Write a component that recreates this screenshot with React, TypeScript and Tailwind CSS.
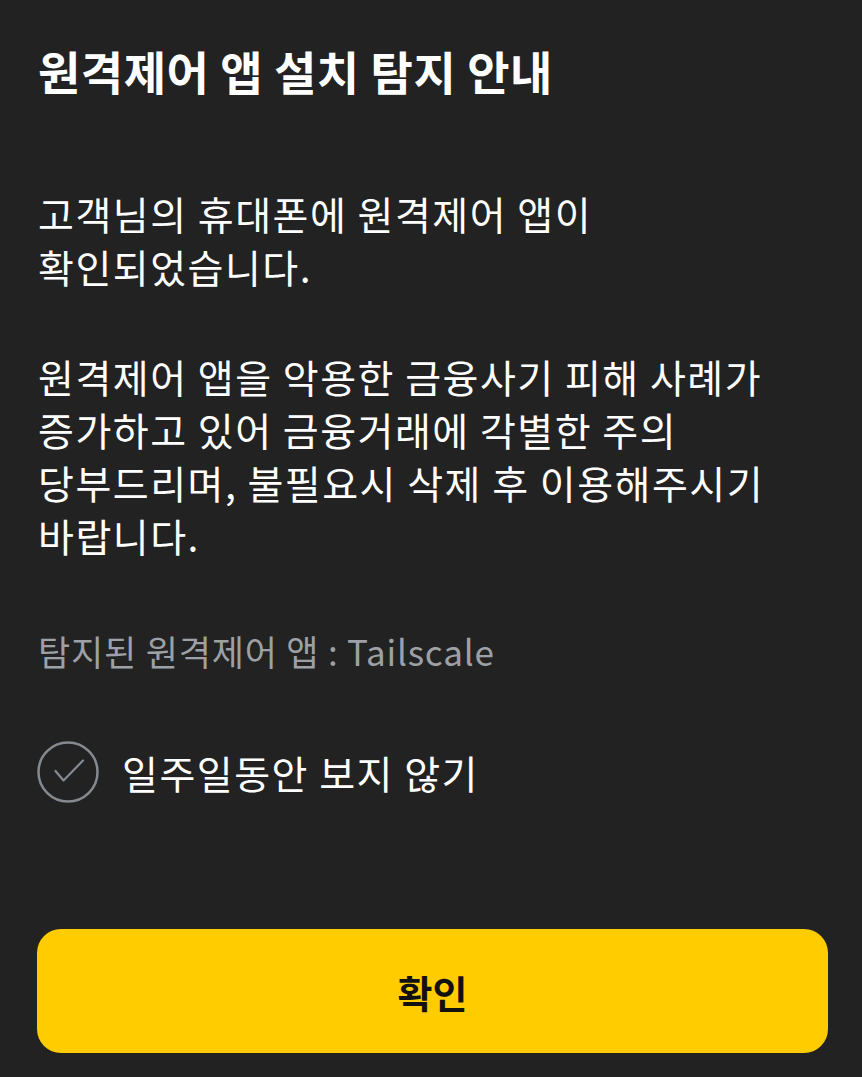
import React from "react";

export default function App() {
  const font = { fontFamily: '"Noto Sans CJK KR", "Noto Sans", sans-serif' };
  return (
    <div className="w-[862px] h-[1077px] bg-[#222222] overflow-hidden flex flex-col px-[37px]" style={font}>
      <h1 className="mt-[41px] pl-[1px] text-[46px] leading-[58px] font-bold text-white whitespace-nowrap tracking-[0.5px]">
        원격제어 앱 설치 탐지 안내
      </h1>
      <div className="mt-[88px] pl-[1px] text-[39px] leading-[53px] text-white whitespace-nowrap tracking-[1.5px]">
        <p>고객님의 휴대폰에 원격제어 앱이<br />확인되었습니다.</p>
        <p className="mt-[57px]">
          원격제어 앱을 악용한 금융사기 피해 사례가<br />
          증가하고 있어 금융거래에 각별한 주의<br />
          당부드리며, 불필요시 삭제 후 이용해주시기<br />
          바랍니다.
        </p>
      </div>
      <p className="mt-[62px] pl-[1px] text-[35px] leading-[53px] text-[#9da0a4] whitespace-nowrap tracking-[0.8px]">
        탐지된 원격제어 앱 : Tailscale
      </p>
      <div className="mt-[64px] flex items-center gap-[23px]">
        <svg width="62" height="62" viewBox="0 0 62 62" fill="none" className="shrink-0">
          <circle cx="31" cy="31" r="29.5" stroke="#858a90" strokeWidth="2.5" />
          <path d="M18.5 30l8 9.5L46 19.5" stroke="#858a90" strokeWidth="2.2" strokeLinecap="round" strokeLinejoin="round" />
        </svg>
        <span className="text-[39px] leading-[53px] text-white whitespace-nowrap tracking-[1.5px]">일주일동안 보지 않기</span>
      </div>
      <button className="mt-[126px] w-[791px] h-[124px] rounded-[24px] bg-[#ffcc00] text-[#111111] text-[38px] font-bold">
        확인
      </button>
    </div>
  );
}
